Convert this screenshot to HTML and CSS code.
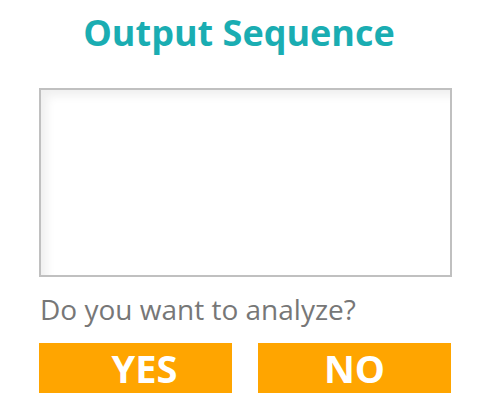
FILE: index.html
```html
<!DOCTYPE html>
<html>
<head>
<meta charset="utf-8">
<link rel="stylesheet" href="styles.css">
</head>
<body>
<div class="page">
  <h1 class="title">Output Sequence</h1>
  <div class="output-box"></div>
  <p class="question">Do you want to analyze?</p>
  <div class="actions">
    <button class="btn btn-yes">YES</button>
    <button class="btn btn-no">NO</button>
  </div>
</div>
</body>
</html>
```

FILE: styles.css
```css
html, body {
  margin: 0;
  padding: 0;
  background: #ffffff;
}
.page {
  width: 480px;
  height: 419px;
  box-sizing: border-box;
  padding: 11px 28px 0 39px;
  font-family: "Open Sans", "Noto Sans", sans-serif;
}
.title {
  margin: 0;
  text-align: center;
  font-size: 36px;
  font-weight: 700;
  color: #1aadb2;
  line-height: 44px;
  padding-right: 13px;
}
.output-box {
  margin-top: 33px;
  height: 189px;
  border: 2px solid #c0c0c0;
  box-sizing: border-box;
  box-shadow: inset 10px 10px 10px -4px #f0f0f0;
  background: #fff;
}
.question {
  margin: 14px 0 0 1px;
  font-size: 28px;
  line-height: 36px;
  color: #777777;
}
.actions {
  margin-top: 16px;
  display: flex;
  gap: 26px;
}
.btn {
  width: 193px;
  height: 50px;
  border: none;
  background: #ffa500;
  color: #ffffff;
  font-family: "Open Sans", "Noto Sans", sans-serif;
  font-weight: 700;
  font-size: 38px;
  line-height: 50px;
  padding: 0;
}
.btn-yes { padding-left: 18px; }
```
